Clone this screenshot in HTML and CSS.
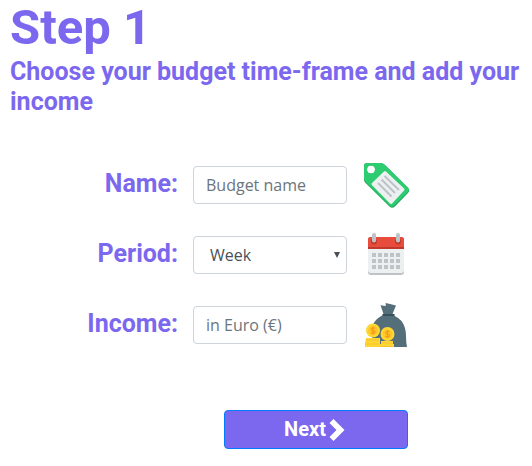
FILE: index.html
```html
<!DOCTYPE html>
<html lang="en">
<head>
<meta charset="utf-8">
<title>Budget – Step 1</title>
<link rel="stylesheet" href="styles.css">
</head>
<body>
<main class="step">
  <h1 class="title">Step 1</h1>
  <h2 class="subtitle">Choose your budget time-frame and add your income</h2>
  <form class="form">
    <div class="row">
      <label class="label" for="name">Name:</label>
      <input class="control" id="name" type="text" placeholder="Budget name">
      <svg class="icon" viewBox="0 0 48 48">
        <path d="M4 1H17.500Q20 1 22 3L45 26Q47.500 28.500 45 31L32 44.500Q29 47 26.500 44.500L2.500 21Q1 19.500 1 17.500V4Q1 1 4 1ZM8 3.500A4 4 0 1 0 8 11.500A4 4 0 1 0 8 3.500Z" fill="#27ae60" fill-rule="evenodd"/>
        <path d="M4 1H17.500Q20 1 22 3L45 25.500Q47 27.500 45 29.500L31 43.500Q29 45.500 27 43.500L2.500 19.500Q1 18 1 16V4Q1 1 4 1ZM8 3.500A4 4 0 1 0 8 11.500A4 4 0 1 0 8 3.500Z" fill="#2ecc71" fill-rule="evenodd"/>
        <path d="M22 10.500L40 27.500L28 40.500L10 22Z" fill="#ecf0f1" stroke="#ecf0f1" stroke-width="3" stroke-linejoin="round"/>
        <path d="M21.500 14L36 28M18.500 17.500L32 31M15 21L28.500 34.500" stroke="#bdc3c7" stroke-width="2"/>
      </svg>
    </div>
    <div class="row">
      <label class="label" for="period">Period:</label>
      <div class="select-wrap">
        <select class="control select" id="period"><option>Week</option><option>Month</option></select>
        <svg class="arrow" viewBox="0 0 6 6"><path d="M0 0H6L3 6Z" fill="#495057"/></svg>
      </div>
      <svg class="icon" viewBox="0 1 48 48">
        <rect x="5" y="7" width="36" height="37" rx="3" fill="#bdc3c7"/>
        <path d="M5 15H41V39Q41 42 38 42H8Q5 42 5 39Z" fill="#ecf0f1"/>
        <path d="M8 6H38Q41 6 41 9V18H5V9Q5 6 8 6Z" fill="#c0392b"/>
        <path d="M8 6H38Q41 6 41 9V16H5V9Q5 6 8 6Z" fill="#e74c3c"/>
        <circle cx="11" cy="10.500" r="3" fill="#c0392b"/><circle cx="35" cy="10.500" r="3" fill="#c0392b"/>
        <path d="M11 4V9.500M35 4V9.500" stroke="#bdc3c7" stroke-width="4" stroke-linecap="round"/>
        <path d="M9 24H37M9 30H37M9 36H37" stroke="#bdc3c7" stroke-width="4" stroke-dasharray="4 2"/>
      </svg>
    </div>
    <div class="row">
      <label class="label" for="income">Income:</label>
      <input class="control" id="income" type="text" placeholder="in Euro (€)">
      <svg class="icon" viewBox="0 0 48 48">
        <path d="M19 13.500H31Q35 15.500 38.500 19Q43 25 43 34Q43 40 44 45H12Q7 34 9.500 24Q11 18 19 13.500Z" fill="#546e7a"/>
        <path d="M17.500 3.300L22.700 4V1L27 2L33 3.500L29.500 12H20.500Z" fill="#546e7a"/>
        <path d="M19.500 13H31.500" stroke="#37505c" stroke-width="2"/>
        <path d="M3 36H17V45H2V41Z" fill="#fdd835"/>
        <path d="M18 39H30V42H31V45H17V42H18Z" fill="#fdd835"/>
        <path d="M3 38H16M2 42H16M18 41H30M17 44.500H31" stroke="#fbc02d" stroke-width="1"/>
        <circle cx="10" cy="28.500" r="7" fill="#fdd835"/><circle cx="10" cy="28.500" r="5" fill="#ffca28"/>
        <circle cx="24.500" cy="32" r="7" fill="#fdd835"/><circle cx="24.500" cy="32" r="5" fill="#ffca28"/>
        <path d="M12 26.500Q10 25 8.500 26.500Q7.500 28.500 10 28.500Q13 29 11.700 30.800Q10 32 8 30.500M10 24.500V32.500M26.500 30Q24.500 28.500 23 30Q22 32 24.500 32Q27.500 32.500 26.200 34.300Q24.500 35.500 22.500 34M24.500 28V36" fill="none" stroke="#f9951b" stroke-width="1.100"/>
      </svg>
    </div>
    <button class="next" type="button">Next<svg class="chevron" viewBox="0 0 16 22"><path d="M0.500 4L4.500 0L15.500 11L4.500 22L0.500 18L7.500 11Z" fill="#fff"/></svg></button>
  </form>
</main>
</body>
</html>
```

FILE: styles.css
```css
* { box-sizing: border-box; }
body { margin: 0; background: #fff; color: #7b68ee; font-family: Roboto, sans-serif; }
.step { padding: 0 10px; }
.title { margin: 0; font-size: 49px; line-height: 55px; font-weight: 700; }
.subtitle { margin: 0; padding-top: 2px; font-size: 25px; line-height: 30px; font-weight: 700; }
.form { padding-top: 44px; }
.row { display: flex; align-items: center; height: 48px; margin-bottom: 22px; }
.label { width: 168px; text-align: right; font-size: 25px; font-weight: 700; line-height: 30px; padding-bottom: 2px; }
.control {
  display: block; width: 154px; height: 38px; margin: 0; padding: 6px 12px;
  border: 1px solid #ced4da; border-radius: 4px; background: #fff;
  color: #495057; font: 400 16px/24px "Open Sans", sans-serif;
}
.control::placeholder { color: #6c757d; opacity: 1; }
.row > .control, .select-wrap { margin-left: 15px; }
.select-wrap { position: relative; }
.select { appearance: none; padding-left: 16px; }
.arrow { position: absolute; right: 7px; top: 16px; width: 6px; height: 6px; }
.icon { width: 48px; height: 48px; margin: 2px 0 0 16px; flex: none; }
.next {
  display: flex; align-items: center; justify-content: center;
  width: 184px; height: 39px; margin: 61px 0 0 214px; padding: 0 3px 2px 0;
  border: 1px solid #007bff; border-radius: 4px; background: #7b68ee;
  color: #fff; font: 700 20px/30px Roboto, sans-serif;
}
.chevron { width: 16px; height: 22px; margin: 3px 0 0 3px; }
```
